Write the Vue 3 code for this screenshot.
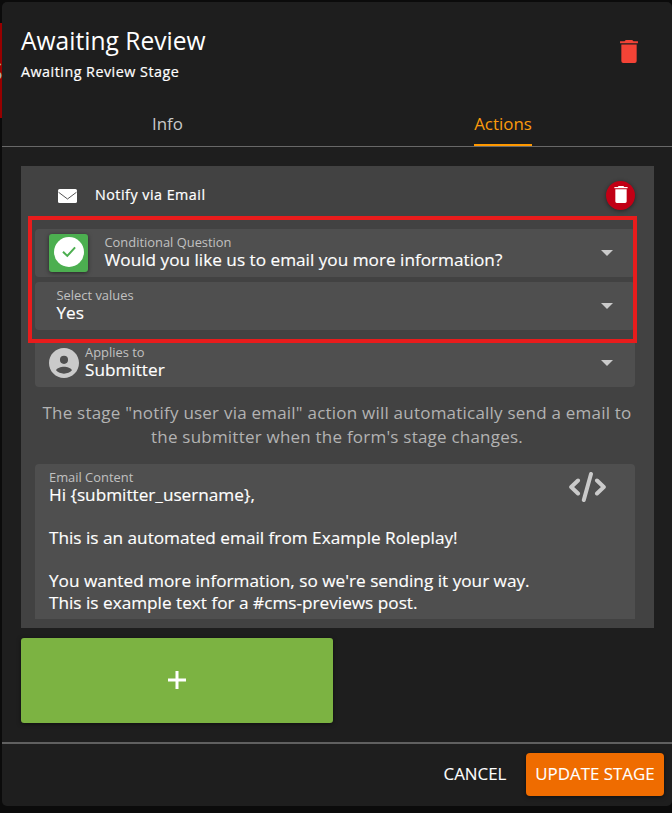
<script setup>
const selects = [
  { kind: 'question', label: 'Conditional Question', value: 'Would you like us to email you more information?' },
  { kind: 'values', label: 'Select values', value: 'Yes' },
  { kind: 'applies', label: 'Applies to', value: 'Submitter' },
]
const emailLines = [
  'Hi {submitter_username},',
  '',
  'This is an automated email from Example Roleplay!',
  '',
  "You wanted more information, so we're sending it your way.",
  'This is example text for a #cms-previews post.',
]
</script>

<template>
  <div class="page">
    <div class="behind"><span>S</span></div>
    <section class="dialog">
      <header class="head">
        <div class="titles">
          <h1>Awaiting Review</h1>
          <p>Awaiting Review Stage</p>
        </div>
        <svg class="trash" viewBox="5 3 14 18"><path d="M19 4h-3.500l-1-1h-5l-1 1H5v1.500h14M6 19.500a1.500 1.500 0 0 0 1.500 1.500h9a1.500 1.500 0 0 0 1.500-1.500V6.500H6z" /></svg>
      </header>

      <nav class="tabs">
        <div class="tab"><span>Info</span></div>
        <div class="tab active"><span>Actions</span></div>
      </nav>

      <main class="body">
        <div class="panel">
          <div class="panel-head">
            <svg class="mail" viewBox="0 0 19 14">
              <rect width="19" height="14" rx="1.6" />
              <path d="M0.5 3.2 9.5 10 18.5 3.2" />
            </svg>
            <span>Notify via Email</span>
            <button class="remove">
              <svg viewBox="5 3 14 18"><path d="M19 4h-3.500l-1-1h-5l-1 1H5v1.500h14M6 19.500a1.500 1.500 0 0 0 1.500 1.500h9a1.500 1.500 0 0 0 1.500-1.500V6.500H6z" /></svg>
            </button>
          </div>

          <div v-for="s in selects" :key="s.kind" class="field" :class="s.kind">
            <div v-if="s.kind === 'question'" class="badge">
              <svg viewBox="0 0 30 30"><circle cx="15" cy="15" r="15" /><path d="M9 14.800l4.300 4.100 7.800-8.600" /></svg>
            </div>
            <svg v-if="s.kind === 'applies'" class="person" viewBox="2 2 20 20">
              <path d="M12 2C6.480 2 2 6.480 2 12s4.480 10 10 10 10-4.480 10-10S17.520 2 12 2zm0 5.200a2.700 2.700 0 1 1 0 5.400 2.700 2.700 0 0 1 0-5.400zm0 11.900c-2.100 0-4-.8-5.300-2.200.4-1.500 3.300-2.400 5.300-2.400s4.900.9 5.300 2.400c-1.300 1.400-3.200 2.200-5.300 2.200z" />
            </svg>
            <div class="texts">
              <div class="label">{{ s.label }}</div>
              <div class="value">{{ s.value }}</div>
            </div>
            <i class="caret"></i>
          </div>

          <p class="hint">
            The stage "notify user via email" action will automatically send a email to<br />
            the submitter when the form's stage changes.
          </p>

          <div class="email">
            <div class="email-text">
              <div class="label">Email Content</div>
              <div v-for="(line, i) in emailLines" :key="i" class="line">{{ line }}</div>
            </div>
            <svg class="code" viewBox="0 0 37 30">
              <path d="M9 8.500 2.200 15 9 21.500M28 8.500 34.800 15 28 21.500M22 2 14.800 28" />
            </svg>
          </div>
          <div class="highlight"></div>
        </div>

        <button class="add">
          <svg viewBox="0 0 18 18"><path d="M9 0v18M0 9h18" /></svg>
        </button>
      </main>

      <footer class="foot">
        <button class="cancel"><span>CANCEL</span></button>
        <button class="update"><span>UPDATE STAGE</span></button>
      </footer>
    </section>
  </div>
</template>

<style>
body { background: #0b0b0b; }
</style>

<style scoped>
* { box-sizing: border-box; }
.page {
  position: relative;
  width: 672px;
  height: 813px;
  padding: 2px 0 7px 2px;
  overflow: hidden;
  background: #0b0b0b;
  color: #fff;
  font-family: "Open Sans", "Noto Sans", sans-serif;
}
.behind {
  position: absolute;
  left: 0;
  top: 23px;
  width: 12px;
  height: 95px;
  background: #970000;
  color: #aaa;
  font-size: 24px;
  line-height: 95px;
}
.behind span { margin-left: -10.500px; }
.dialog {
  position: relative;
  display: flex;
  flex-direction: column;
  height: 804px;
  border-radius: 5px;
  background: #1e1e1e;
}
.head {
  display: flex;
  justify-content: space-between;
  height: 100px;
  padding: 22px 34px 0 19px;
}
h1, p { margin: 0; font-weight: 400; white-space: nowrap; }
h1 { padding-top: 1px; font-size: 24.600px; line-height: 32px; }
.titles p { margin-top: 4px; font-size: 14.300px; line-height: 22px; letter-spacing: 0.5px; -webkit-text-stroke: 0.2px; }
.trash { width: 18px; height: 23px; margin-top: 16px; fill: #f44336; }
.tabs {
  display: grid;
  grid-template-columns: 331px 1fr;
  height: 45px;
  border-bottom: 1px solid #686868;
}
.tab { display: flex; justify-content: center; color: #c9c9c9; font-size: 16.900px; line-height: 44px; }
.tab.active { padding-left: 1px; color: #fb9a0c; }
.tab.active span { height: 44px; border-bottom: 2px solid #ff9800; }
.body { height: 595px; padding: 19px 18px 0 19px; }
.panel { position: relative; width: 633px; height: 462px; padding: 0 19px 0 14px; background: #424242; }
.panel-head { display: flex; align-items: center; height: 63px; padding: 0 0 5px 22px; font-size: 14.300px; letter-spacing: 0.5px; }
.mail { width: 19px; height: 14px; margin: 2px 18px 0 1px; }
.panel-head > span { margin: -2px auto 0 0; -webkit-text-stroke: 0.2px; }
.mail rect { fill: #fff; }
.mail path { fill: none; stroke: #424242; stroke-width: 0.9; }
button { display: flex; align-items: center; justify-content: center; padding: 0; border: 0; color: #fff; font-family: inherit; }
.remove { width: 29px; height: 29px; border-radius: 50%; background: #c10015; box-shadow: 0 1px 4px rgba(0, 0, 0, 0.45); }
.remove svg { width: 14px; height: 17px; margin-top: -2px; fill: #fff; }
.field { display: flex; align-items: center; height: 48px; padding: 0 22.500px 0 14px; border-radius: 4px; background: #4f4f4f; }
.field.values { margin-top: 5px; padding-left: 21.500px; }
.field.applies { margin-top: 9px; }
.badge { display: flex; align-items: center; justify-content: center; width: 39px; height: 38px; margin-right: 16.500px; border-radius: 3px; background: #4caf50; box-shadow: 0 1px 4px rgba(0, 0, 0, 0.5); }
.badge svg { width: 30px; height: 30px; margin-top: -2px; }
.badge circle { fill: #fff; }
.badge path { fill: none; stroke: #4caf50; stroke-width: 2; }
.person { width: 30px; height: 30px; margin-right: 6px; fill: #cacaca; }
.texts { flex: 1; margin-top: -2px; white-space: nowrap; }
.label { color: #c1c1c1; font-size: 12.900px; line-height: 16px; }
.value { font-size: 17.200px; line-height: 20px; -webkit-text-stroke: 0.15px; }
.caret { border: 6.500px solid transparent; border-top-color: #cacaca; border-bottom: 0; }
.hint { margin: 14px -2px 0 2px; color: #b3b3b3; font-size: 17px; line-height: 24px; letter-spacing: 0.220px; text-align: center; }
.email { display: flex; justify-content: space-between; height: 155px; margin-top: 15px; padding: 5px 29px 0 14px; border-radius: 4px 4px 0 0; background: #4f4f4f; }
.email-text { white-space: nowrap; }
.email-text .label { height: 15px; }
.line { height: 21.600px; font-size: 17.200px; line-height: 21.600px; -webkit-text-stroke: 0.15px; }
.code { width: 37px; height: 30px; margin-top: 3px; fill: none; stroke: #cacaca; stroke-width: 4; stroke-linecap: round; stroke-linejoin: round; }
.highlight { position: absolute; left: 7px; top: 50px; width: 609px; height: 127px; border: 4px solid #e81c1c; }
.add { width: 312px; height: 85px; margin-top: 10px; border-radius: 3px; background: #7cb342; box-shadow: 0 1px 4px rgba(0, 0, 0, 0.5); }
.add svg { width: 18px; height: 18px; margin-top: -2px; }
.add path { stroke: #fff; stroke-width: 3; }
.foot { display: flex; justify-content: flex-end; height: 64px; padding: 9px 8px 0; border-top: 2px solid #606060; }
.foot button { height: 43px; padding-bottom: 3px; font-size: 16.900px; white-space: nowrap; -webkit-text-stroke: 0.1px; }
.cancel { width: 82px; margin-right: 10px; background: transparent; }
.update { width: 138px; border-radius: 4px; background: #ef6c00; box-shadow: 0 1px 4px rgba(0, 0, 0, 0.5); }
</style>
